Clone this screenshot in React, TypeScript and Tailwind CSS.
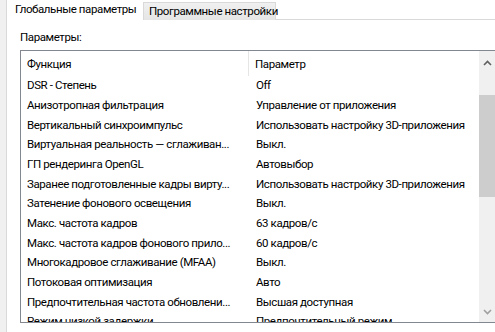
import React from "react";

const rows: [string, string][] = [
  ["DSR - Степень", "Off"],
  ["Анизотропная фильтрация", "Управление от приложения"],
  ["Вертикальный синхроимпульс", "Использовать настройку 3D-приложения"],
  ["Виртуальная реальность — сглаживан...", "Выкл."],
  ["ГП рендеринга OpenGL", "Автовыбор"],
  ["Заранее подготовленные кадры вирту...", "Использовать настройку 3D-приложения"],
  ["Затенение фонового освещения", "Выкл."],
  ["Макс. частота кадров", "63 кадров/с"],
  ["Макс. частота кадров фонового прило...", "60 кадров/с"],
  ["Многокадровое сглаживание (MFAA)", "Выкл."],
  ["Потоковая оптимизация", "Авто"],
  ["Предпочтительная частота обновлени...", "Высшая доступная"],
  ["Режим низкой задержки", "Предпочтительный режим"],
];

export default function App() {
  return (
    <div
      className="w-[495px] h-[332px] overflow-hidden bg-white text-[11.5px] tracking-[-0.4px] text-black flex"
      style={{ fontFamily: 'Roboto, "Liberation Sans", Arial, sans-serif' }}
    >
      <div className="w-[6px] shrink-0 bg-[#f0f0f0]" />
      <div className="flex-1 flex flex-col min-w-0">
        {/* tabs */}
        <div className="flex h-[20px] shrink-0">
          <div className="w-[137px] shrink-0 h-[20px] border-l border-[#d9d9d9] bg-white flex items-center pl-[8px] whitespace-nowrap">
            Глобальные параметры
          </div>
          <div className="w-[133px] shrink-0 h-[18px] mt-[2px] border border-[#d9d9d9] border-b-0 bg-gradient-to-b from-[#f0f0f0] to-[#e5e5e5] flex items-center pl-[5px] whitespace-nowrap">
            Программные настройки
          </div>
          <div className="flex-1 border-b border-[#d9d9d9]" />
        </div>
        <div className="h-[312px] shrink-0 border-l border-[#d9d9d9] flex flex-col pl-[13px]">
          <div className="h-[30px] shrink-0 flex items-center pt-[6px]">Параметры:</div>
          <div className="w-[490px] h-[273px] shrink-0 border border-[#828790] flex overflow-hidden">
            <div className="w-[458px] h-[271px] shrink-0 flex flex-col overflow-hidden">
              <div className="h-[25px] shrink-0 flex">
                <div className="w-[228px] flex items-center pl-[6px] pt-[3px] border-r border-[#e5e5e5]">Функция</div>
                <div className="flex-1 flex items-center pl-[6px] pt-[3px]">Параметр</div>
              </div>
              {rows.map(([a, b], i) => (
                <div key={i} className="h-[19.7px] shrink-0 flex items-center">
                  <div className="w-[229px] pl-[6px] whitespace-nowrap overflow-hidden">{a}</div>
                  <div className="flex-1 pl-[6px] whitespace-nowrap overflow-hidden">{b}</div>
                </div>
              ))}
            </div>
            <div className="w-[17px] h-[271px] shrink-0 bg-[#f0f0f0] flex flex-col items-center">
              <div className="h-[24px] shrink-0 flex items-center justify-center">
                <svg width="9" height="6" viewBox="0 0 9 6">
                  <path d="M1 5 L4.5 1.5 L8 5" stroke="#606060" strokeWidth="1.6" fill="none" />
                </svg>
              </div>
              <div className="w-[17px] h-[102px] shrink-0 mt-[20px] bg-[#cdcdcd]" />
              <div className="flex-1" />
              <div className="h-[20px] shrink-0 flex items-center justify-center">
                <svg width="9" height="6" viewBox="0 0 9 6">
                  <path d="M1 1 L4.5 4.5 L8 1" stroke="#a0a0a0" strokeWidth="1.6" fill="none" />
                </svg>
              </div>
            </div>
          </div>
        </div>
      </div>
    </div>
  );
}
